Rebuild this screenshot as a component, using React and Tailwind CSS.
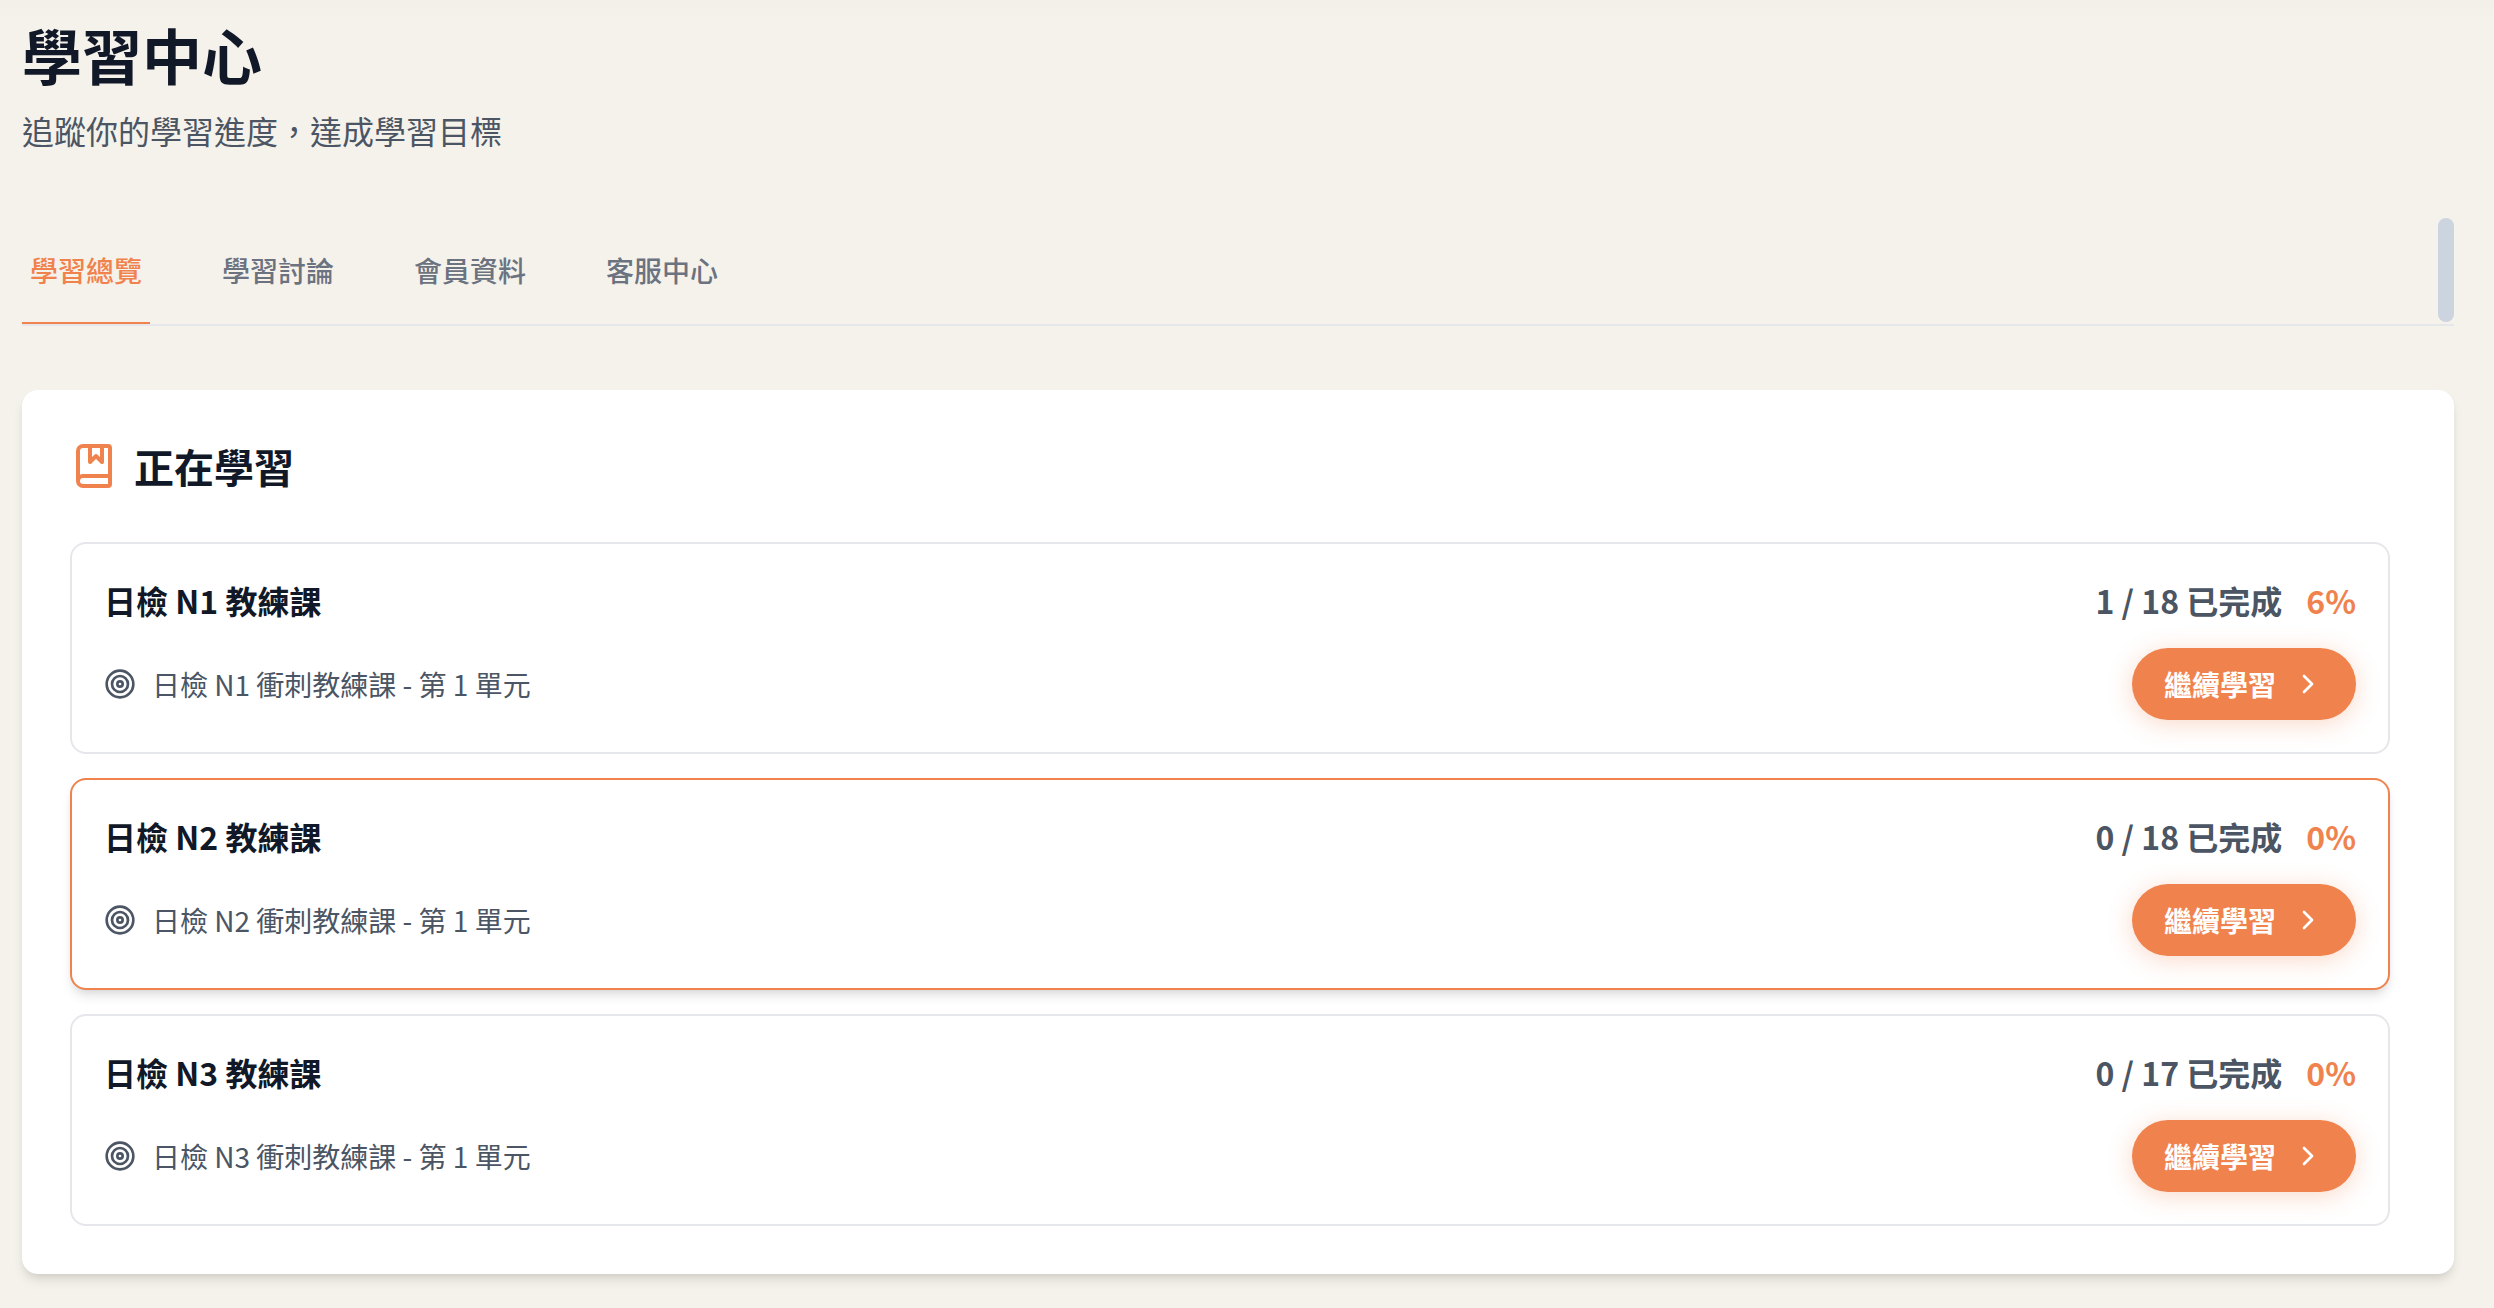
import { useState } from "react";
import { BookMarked, ChevronRight, Target } from "lucide-react";

const tabs = [
  { id: "overview", label: "學習總覽" },
  { id: "discussion", label: "學習討論" },
  { id: "profile", label: "會員資料" },
  { id: "support", label: "客服中心" },
];

const courses = [
  { id: "n1", title: "日檢 N1 教練課", unit: "日檢 N1 衝刺教練課 - 第 1 單元", done: 1, total: 18 },
  { id: "n2", title: "日檢 N2 教練課", unit: "日檢 N2 衝刺教練課 - 第 1 單元", done: 0, total: 18, highlighted: true },
  { id: "n3", title: "日檢 N3 教練課", unit: "日檢 N3 衝刺教練課 - 第 1 單元", done: 0, total: 17 },
];

function Tabs({ active, onChange }) {
  return (
    <nav className="mt-16 flex items-start border-b-2 border-[#e5e7eb]">
      <div className="flex flex-1 gap-16">
        {tabs.map((tab) => (
          <button
            key={tab.id}
            type="button"
            onClick={() => onChange(tab.id)}
            className={`border-b-2 px-2 py-8 text-[28px] leading-10 font-medium ${active === tab.id ? "border-[#f0824d] text-[#f0824d]" : "border-transparent text-[#6b7280]"}`}
          >
            {tab.label}
          </button>
        ))}
      </div>
      {/* Scroll thumb */}
      <div className="h-[104px] w-4 rounded-full bg-[#ccd4e0]" />
    </nav>
  );
}

function CourseCard({ course }) {
  const percent = Math.round((course.done / course.total) * 100);
  return (
    <li className={`rounded-2xl border-2 bg-white p-8 ${course.highlighted ? "border-[#f0824d] shadow-[0_8px_12px_-2px_rgba(0,0,0,0.1),0_4px_8px_-4px_rgba(0,0,0,0.1)]" : "border-[#e5e7eb]"}`}>
      <div className="flex items-center justify-between text-[32px] leading-[48px] font-bold">
        <h3 className="text-[#111827]">{course.title}</h3>
        <p className="flex gap-6">
          <span className="text-[#4b5563]">{`${course.done} / ${course.total} 已完成`}</span>
          <span className="text-[#f0824d]">{`${percent}%`}</span>
        </p>
      </div>
      <div className="mt-6 flex items-center justify-between text-[28px] leading-10">
        <p className="flex items-center gap-4 text-[#4b5563]">
          <Target className="size-8" />
          {course.unit}
        </p>
        <button type="button" className="flex items-center gap-4 rounded-full bg-[#f0824d] px-8 py-4 font-bold text-white shadow-[0_4px_24px_rgba(240,130,77,0.3)]">
          繼續學習
          <ChevronRight className="size-8" />
        </button>
      </div>
    </li>
  );
}

export default function App() {
  const [active, setActive] = useState("overview");

  return (
    <div className="min-h-screen bg-[#f5f2eb] bg-linear-to-b from-black/1 to-transparent to-[20px] pt-[18px] pr-10 pb-8 pl-[22px] font-['Noto_Sans_CJK_TC',sans-serif]">
      <header>
        <h1 className="text-[60px] leading-[72px] font-bold text-[#111827]">學習中心</h1>
        <p className="mt-4 text-[32px] leading-[48px] text-[#4b5563]">追蹤你的學習進度，達成學習目標</p>
      </header>

      <Tabs active={active} onChange={setActive} />

      <section className="mt-16 rounded-2xl bg-white py-12 pr-16 pl-12 shadow-[0_8px_12px_-2px_rgba(0,0,0,0.1),0_4px_8px_-4px_rgba(0,0,0,0.1)]">
        <h2 className="flex items-center gap-4 text-[40px] leading-[56px] font-bold text-[#111827]">
          <BookMarked className="size-12 text-[#f0824d]" />
          正在學習
        </h2>
        <ul className="mt-12 flex flex-col gap-6">
          {courses.map((course) => (
            <CourseCard key={course.id} course={course} />
          ))}
        </ul>
      </section>
    </div>
  );
}
